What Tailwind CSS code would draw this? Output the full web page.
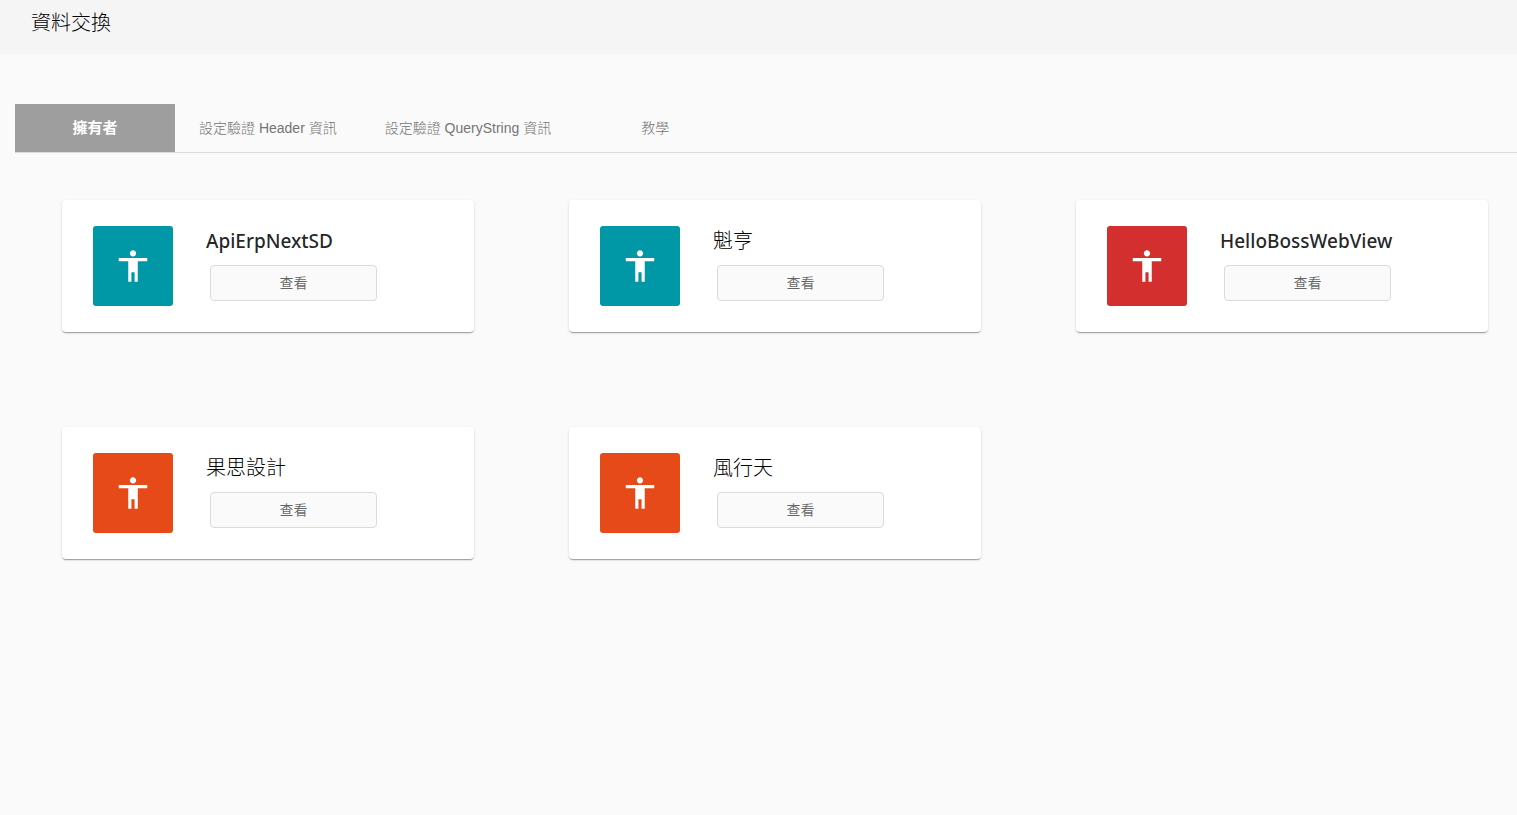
<!DOCTYPE html>
<html lang="zh-Hant">
<head>
<meta charset="utf-8">
<meta name="viewport" content="width=device-width, initial-scale=1">
<title>資料交換</title>
<script src="https://cdn.jsdelivr.net/npm/@tailwindcss/browser@4"></script>
</head>
<body class="min-h-screen bg-[#fafafa] font-['Noto_Sans','Noto_Sans_CJK_TC',sans-serif] text-black/87">
<svg class="hidden" aria-hidden="true">
  <symbol id="person" viewBox="0 0 24 24"><path d="M12 2c1.1 0 2 .9 2 2s-.9 2-2 2-2-.9-2-2 .9-2 2-2zm9 7h-6v13h-2v-6h-2v6H9V9H3V7h18v2z"/></symbol>
</svg>
<header class="h-[54px] bg-[#f5f5f5] px-[31px] pt-[7px]">
  <h1 class="text-xl leading-8 font-light text-black">資料交換</h1>
</header>
<main class="pt-[50px]">
  <div role="tablist" class="ml-[15px] flex border-b border-[#dbdbdb] font-['Liberation_Sans','Noto_Sans_CJK_TC',sans-serif] text-sm font-light text-[#757575]">
    <button role="tab" aria-selected="true" class="h-12 min-w-40 bg-[#9e9e9e] px-6 text-[15px] font-bold text-white">擁有者</button>
    <button role="tab" aria-selected="false" class="h-12 min-w-40 px-6">設定驗證 Header 資訊</button>
    <button role="tab" aria-selected="false" class="h-12 min-w-40 px-6">設定驗證 QueryString 資訊</button>
    <button role="tab" aria-selected="false" class="h-12 min-w-40 px-6">教學</button>
  </div>
  <section class="grid grid-cols-3 gap-[95px] pt-[47px] pr-[29px] pb-12 pl-[62px]">
    <article class="flex gap-[33px] rounded bg-white px-[31px] py-[26px] shadow-[0_2px_1px_-1px_rgba(0,0,0,0.2),0_1px_1px_0_rgba(0,0,0,0.14),0_1px_3px_0_rgba(0,0,0,0.12)]">
      <div class="flex size-20 shrink-0 items-center justify-center rounded-[3px] bg-[#0097a7]"><svg class="size-[38px] fill-white"><use href="#person"/></svg></div>
      <div class="min-w-0"><h2 class="text-[19px] leading-[31px] font-medium">ApiErpNextSD</h2>
      <button class="mt-2 ml-1 block h-9 w-[167px] rounded border border-[#dbdbdb] bg-[#fafafa] text-sm text-black/60">查看</button></div>
    </article>
    <article class="flex gap-[33px] rounded bg-white px-[31px] py-[26px] shadow-[0_2px_1px_-1px_rgba(0,0,0,0.2),0_1px_1px_0_rgba(0,0,0,0.14),0_1px_3px_0_rgba(0,0,0,0.12)]">
      <div class="flex size-20 shrink-0 items-center justify-center rounded-[3px] bg-[#0097a7]"><svg class="size-[38px] fill-white"><use href="#person"/></svg></div>
      <div class="min-w-0"><h2 class="text-xl leading-[29px] font-light text-black">魁亨</h2>
      <button class="mt-2.5 ml-1 block h-9 w-[167px] rounded border border-[#dbdbdb] bg-[#fafafa] text-sm text-black/60">查看</button></div>
    </article>
    <article class="flex gap-[33px] rounded bg-white px-[31px] py-[26px] shadow-[0_2px_1px_-1px_rgba(0,0,0,0.2),0_1px_1px_0_rgba(0,0,0,0.14),0_1px_3px_0_rgba(0,0,0,0.12)]">
      <div class="flex size-20 shrink-0 items-center justify-center rounded-[3px] bg-[#d32f2f]"><svg class="size-[38px] fill-white"><use href="#person"/></svg></div>
      <div class="min-w-0"><h2 class="text-[19px] leading-[31px] font-medium">HelloBossWebView</h2>
      <button class="mt-2 ml-1 block h-9 w-[167px] rounded border border-[#dbdbdb] bg-[#fafafa] text-sm text-black/60">查看</button></div>
    </article>
    <article class="flex gap-[33px] rounded bg-white px-[31px] py-[26px] shadow-[0_2px_1px_-1px_rgba(0,0,0,0.2),0_1px_1px_0_rgba(0,0,0,0.14),0_1px_3px_0_rgba(0,0,0,0.12)]">
      <div class="flex size-20 shrink-0 items-center justify-center rounded-[3px] bg-[#e64a19]"><svg class="size-[38px] fill-white"><use href="#person"/></svg></div>
      <div class="min-w-0"><h2 class="text-xl leading-[29px] font-light text-black">果思設計</h2>
      <button class="mt-2.5 ml-1 block h-9 w-[167px] rounded border border-[#dbdbdb] bg-[#fafafa] text-sm text-black/60">查看</button></div>
    </article>
    <article class="flex gap-[33px] rounded bg-white px-[31px] py-[26px] shadow-[0_2px_1px_-1px_rgba(0,0,0,0.2),0_1px_1px_0_rgba(0,0,0,0.14),0_1px_3px_0_rgba(0,0,0,0.12)]">
      <div class="flex size-20 shrink-0 items-center justify-center rounded-[3px] bg-[#e64a19]"><svg class="size-[38px] fill-white"><use href="#person"/></svg></div>
      <div class="min-w-0"><h2 class="text-xl leading-[29px] font-light text-black">風行天</h2>
      <button class="mt-2.5 ml-1 block h-9 w-[167px] rounded border border-[#dbdbdb] bg-[#fafafa] text-sm text-black/60">查看</button></div>
    </article>
  </section>
</main>
</body>
</html>
